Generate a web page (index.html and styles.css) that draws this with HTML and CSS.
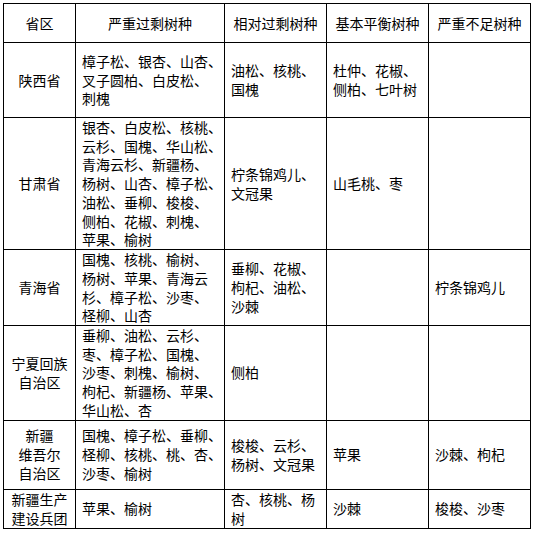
FILE: index.html
```html
<!DOCTYPE html>
<html lang="zh-CN">
<head>
<meta charset="utf-8">
<title>树种统计</title>
<link rel="stylesheet" href="styles.css">
</head>
<body>
<table class="grid">
  <colgroup>
    <col class="c-prov">
    <col class="c-wide">
    <col class="c-mid">
    <col class="c-mid">
    <col class="c-last">
  </colgroup>
  <thead>
    <tr class="r-head">
      <th>省区</th>
      <th>严重过剩树种</th>
      <th>相对过剩树种</th>
      <th>基本平衡树种</th>
      <th>严重不足树种</th>
    </tr>
  </thead>
  <tbody>
    <tr class="r-1">
      <td class="prov">陕西省</td>
      <td>樟子松、银杏、山杏、<br>叉子圆柏、白皮松、<br>刺槐</td>
      <td>油松、核桃、<br>国槐</td>
      <td>杜仲、花椒、<br>侧柏、七叶树</td>
      <td></td>
    </tr>
    <tr class="r-2">
      <td class="prov">甘肃省</td>
      <td>银杏、白皮松、核桃、<br>云杉、国槐、华山松、<br>青海云杉、新疆杨、<br>杨树、山杏、樟子松、<br>油松、垂柳、梭梭、<br>侧柏、花椒、刺槐、<br>苹果、榆树</td>
      <td>柠条锦鸡儿、<br>文冠果</td>
      <td>山毛桃、枣</td>
      <td></td>
    </tr>
    <tr class="r-3">
      <td class="prov">青海省</td>
      <td>国槐、核桃、榆树、<br>杨树、苹果、青海云<br>杉、樟子松、沙枣、<br>柽柳、山杏</td>
      <td>垂柳、花椒、<br>枸杞、油松、<br>沙棘</td>
      <td></td>
      <td>柠条锦鸡儿</td>
    </tr>
    <tr class="r-4">
      <td class="prov">宁夏回族<br>自治区</td>
      <td>垂柳、油松、云杉、<br>枣、樟子松、国槐、<br>沙枣、刺槐、榆树、<br>枸杞、新疆杨、苹果、<br>华山松、杏</td>
      <td>侧柏</td>
      <td></td>
      <td></td>
    </tr>
    <tr class="r-5">
      <td class="prov">新疆<br>维吾尔<br>自治区</td>
      <td>国槐、樟子松、垂柳、<br>柽柳、核桃、桃、杏、<br>沙枣、榆树</td>
      <td>梭梭、云杉、<br>杨树、文冠果</td>
      <td>苹果</td>
      <td>沙棘、枸杞</td>
    </tr>
    <tr class="r-6">
      <td class="prov">新疆生产<br>建设兵团</td>
      <td>苹果、榆树</td>
      <td>杏、核桃、杨<br>树</td>
      <td>沙棘</td>
      <td>梭梭、沙枣</td>
    </tr>
  </tbody>
</table>
</body>
</html>
```

FILE: styles.css
```css
html, body {
  margin: 0;
  padding: 0;
  background: #ffffff;
}

body {
  padding: 3px;
  font-family: "Noto Sans CJK SC", "Noto Sans", sans-serif;
  font-size: 14px;
  line-height: 18.7px;
  color: #000000;
}

.grid {
  border-collapse: collapse;
  table-layout: fixed;
  width: 528px;
}

.c-prov { width: 72px; }
.c-wide { width: 149px; }
.c-mid { width: 102px; }
.c-last { width: 102px; }

.grid th,
.grid td {
  border: 1px solid #000000;
  padding: 0 4px 0 6px;
  vertical-align: middle;
  text-align: left;
  font-weight: normal;
  white-space: nowrap;
}

.grid th {
  text-align: center;
  padding: 0;
}

.grid td.prov {
  text-align: center;
  padding: 0;
}

.r-head { height: 39px; }
.r-1 { height: 75px; }
.r-2 { height: 132px; }
.r-3 { height: 76px; }
.r-4 { height: 94px; }
.r-5 { height: 69px; }
.r-6 { height: 39px; }
```
